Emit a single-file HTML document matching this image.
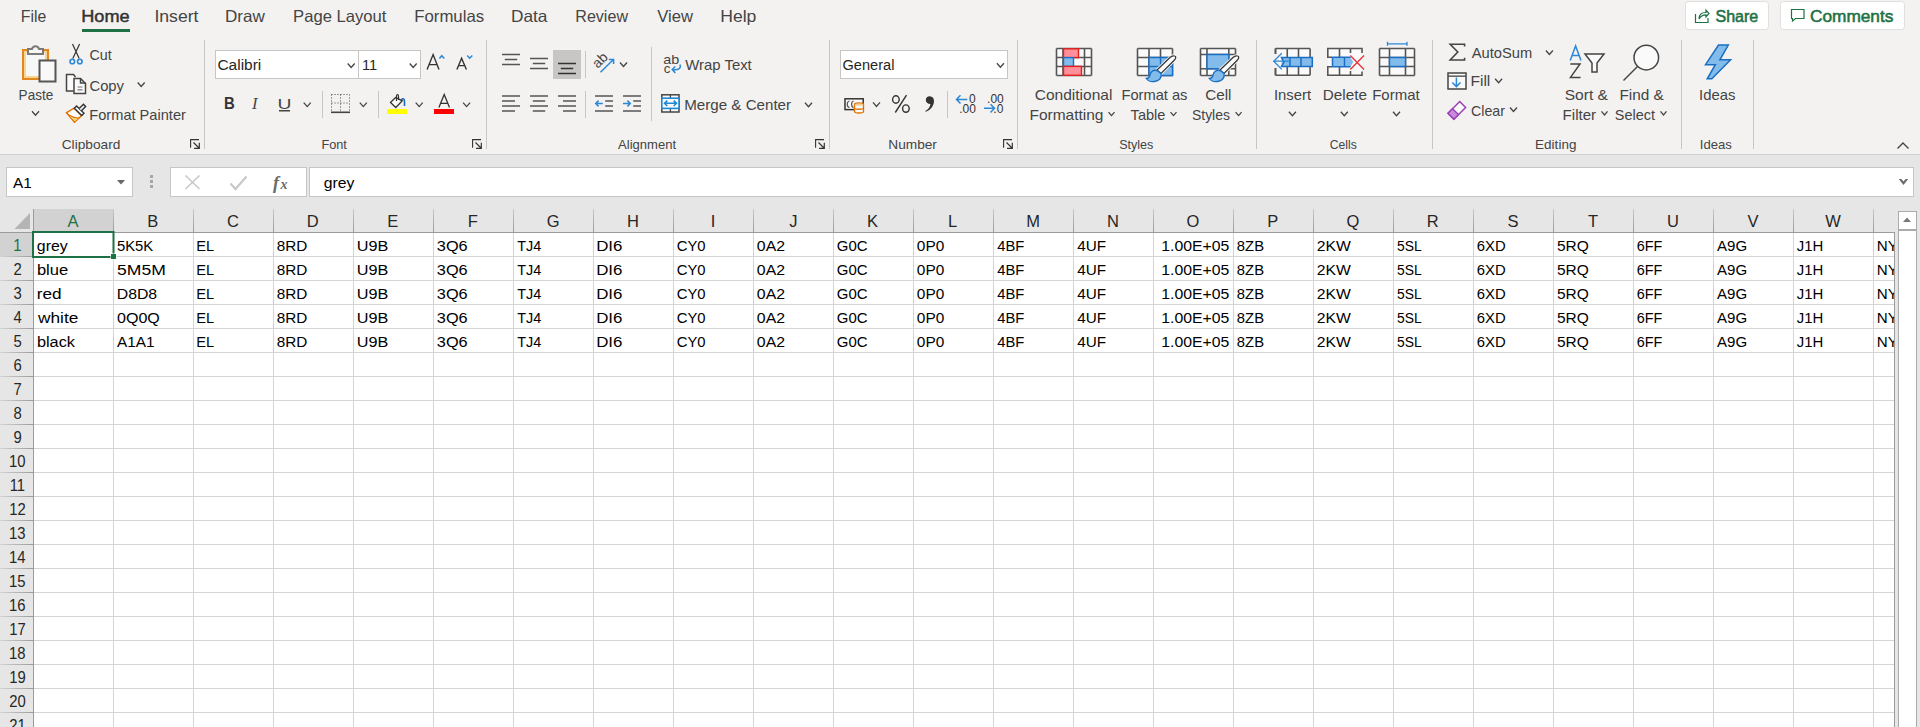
<!DOCTYPE html><html><head><meta charset="utf-8"><style>
html,body{margin:0;padding:0;width:1920px;height:727px;overflow:hidden;background:#e6e6e6}
svg{display:block;font-family:"Liberation Sans",sans-serif}
</style></head><body><svg width="1920" height="727" viewBox="0 0 1920 727">
<rect x="0" y="0" width="1920" height="154" fill="#f3f2f1" />
<rect x="0" y="154" width="1920" height="1" fill="#d2d0ce" />
<rect x="0" y="155" width="1920" height="572" fill="#e6e6e6" />
<text x="20.73" y="22" font-size="16.5" font-weight="normal" fill="#444444" textLength="25.50" lengthAdjust="spacingAndGlyphs">File</text>
<text stroke="#333333" stroke-width="0.45" x="81.25" y="22" font-size="16.5" font-weight="normal" fill="#333333" textLength="48.42" lengthAdjust="spacingAndGlyphs">Home</text>
<text x="154.41" y="22" font-size="16.5" font-weight="normal" fill="#444444" textLength="44.09" lengthAdjust="spacingAndGlyphs">Insert</text>
<text x="225.03" y="22" font-size="16.5" font-weight="normal" fill="#444444" textLength="39.95" lengthAdjust="spacingAndGlyphs">Draw</text>
<text x="293.07" y="22" font-size="16.5" font-weight="normal" fill="#444444" textLength="93.43" lengthAdjust="spacingAndGlyphs">Page Layout</text>
<text x="414.26" y="22" font-size="16.5" font-weight="normal" fill="#444444" textLength="69.89" lengthAdjust="spacingAndGlyphs">Formulas</text>
<text x="511.02" y="22" font-size="16.5" font-weight="normal" fill="#444444" textLength="36.42" lengthAdjust="spacingAndGlyphs">Data</text>
<text x="575.32" y="22" font-size="16.5" font-weight="normal" fill="#444444" textLength="52.67" lengthAdjust="spacingAndGlyphs">Review</text>
<text x="657.32" y="22" font-size="16.5" font-weight="normal" fill="#444444" textLength="35.68" lengthAdjust="spacingAndGlyphs">View</text>
<text x="720.19" y="22" font-size="16.5" font-weight="normal" fill="#444444" textLength="36.14" lengthAdjust="spacingAndGlyphs">Help</text>
<rect x="82" y="29" width="48" height="3" fill="#1e7145" />
<rect x="1685.5" y="1.5" width="83" height="28" fill="#ffffff" stroke="#e1dfdd" stroke-width="1" rx="3"/>
<rect x="1780.5" y="1.5" width="124" height="28" fill="#ffffff" stroke="#e1dfdd" stroke-width="1" rx="3"/>
<text stroke="#1e7145" stroke-width="0.55" x="1715.48" y="22.3" font-size="16.5" font-weight="normal" fill="#1e7145" textLength="42.80" lengthAdjust="spacingAndGlyphs">Share</text>
<text stroke="#1e7145" stroke-width="0.55" x="1809.94" y="22.3" font-size="16.5" font-weight="normal" fill="#1e7145" textLength="83.46" lengthAdjust="spacingAndGlyphs">Comments</text>
<path d="M1695.5,14 V22.5 H1708 V18" fill="none" stroke="#1e7145" stroke-width="1.2" />
<path d="M1699,19 C1699,14 1702,12.5 1706,12.5 V10 L1709,13.5 L1706,17 V14.8 C1703,14.8 1700.5,16 1699,19 Z" fill="none" stroke="#1e7145" stroke-width="1.2" />
<path d="M1791.5,9.5 H1804 V18.5 H1795.5 L1792.5,21 V18.5 H1791.5 Z" fill="none" stroke="#1e7145" stroke-width="1.2" />
<rect x="204" y="40" width="1" height="109" fill="#c8c6c4" />
<rect x="486" y="40" width="1" height="109" fill="#c8c6c4" />
<rect x="829" y="40" width="1" height="109" fill="#c8c6c4" />
<rect x="1017" y="40" width="1" height="109" fill="#c8c6c4" />
<rect x="1256" y="40" width="1" height="109" fill="#c8c6c4" />
<rect x="1432" y="40" width="1" height="109" fill="#c8c6c4" />
<rect x="1681" y="40" width="1" height="109" fill="#c8c6c4" />
<rect x="1753" y="40" width="1" height="109" fill="#c8c6c4" />
<text x="61.71" y="149" font-size="12.8" font-weight="normal" fill="#444444" textLength="58.68" lengthAdjust="spacingAndGlyphs">Clipboard</text>
<text x="321.38" y="149" font-size="12.8" font-weight="normal" fill="#444444" textLength="25.50" lengthAdjust="spacingAndGlyphs">Font</text>
<text x="618.10" y="149" font-size="12.8" font-weight="normal" fill="#444444" textLength="57.99" lengthAdjust="spacingAndGlyphs">Alignment</text>
<text x="888.31" y="149" font-size="12.8" font-weight="normal" fill="#444444" textLength="48.62" lengthAdjust="spacingAndGlyphs">Number</text>
<text x="1119.13" y="149" font-size="12.8" font-weight="normal" fill="#444444" textLength="34.28" lengthAdjust="spacingAndGlyphs">Styles</text>
<text x="1329.79" y="149" font-size="12.8" font-weight="normal" fill="#444444" textLength="27.01" lengthAdjust="spacingAndGlyphs">Cells</text>
<text x="1535.12" y="149" font-size="12.8" font-weight="normal" fill="#444444" textLength="41.30" lengthAdjust="spacingAndGlyphs">Editing</text>
<text x="1699.82" y="149" font-size="12.8" font-weight="normal" fill="#444444" textLength="32.06" lengthAdjust="spacingAndGlyphs">Ideas</text>
<path d="M190.6,147.8 V139.6 H199" fill="none" stroke="#333" stroke-width="1.1" />
<path d="M193.5,142.5 L199,148 M199.3,142.8 V148.3 H194" fill="none" stroke="#333" stroke-width="1.2" />
<path d="M472.6,147.8 V139.6 H481" fill="none" stroke="#333" stroke-width="1.1" />
<path d="M475.5,142.5 L481,148 M481.3,142.8 V148.3 H476" fill="none" stroke="#333" stroke-width="1.2" />
<path d="M815.6,147.8 V139.6 H824" fill="none" stroke="#333" stroke-width="1.1" />
<path d="M818.5,142.5 L824,148 M824.3,142.8 V148.3 H819" fill="none" stroke="#333" stroke-width="1.2" />
<path d="M1003.6,147.8 V139.6 H1012" fill="none" stroke="#333" stroke-width="1.1" />
<path d="M1006.5,142.5 L1012,148 M1012.3,142.8 V148.3 H1007" fill="none" stroke="#333" stroke-width="1.2" />
<path d="M1897.5,148.5 L1903,143 L1908.5,148.5" fill="none" stroke="#444" stroke-width="1.4" />
<rect x="23" y="50" width="25" height="29" fill="#f7f7f7" stroke="#e3871f" stroke-width="2" />
<rect x="25" y="52" width="21" height="25" fill="none" stroke="#f6d58e" stroke-width="2" />
<path d="M28,49 H32 A3.6,3.6 0 0 1 39,49 H43 V54 H28 Z" fill="#f7f7f7" stroke="#7a7a7a" stroke-width="2" />
<rect x="39.5" y="60.5" width="16" height="21" fill="#f9f9f9" stroke="#555555" stroke-width="2" />
<text x="18.62" y="99.7" font-size="14.5" font-weight="normal" fill="#444444" textLength="34.62" lengthAdjust="spacingAndGlyphs">Paste</text>
<path d="M32.0,111.3 L35.5,115.3 L39.0,111.3" fill="none" stroke="#444" stroke-width="1.3" />
<path d="M72.5,44 L79.2,58.5 M79.6,44 L72.8,58.5" fill="none" stroke="#333" stroke-width="1.2" />
<circle cx="72.3" cy="61.5" r="2.3" fill="none" stroke="#2b88d8" stroke-width="1.6"/>
<circle cx="79.8" cy="61.5" r="2.3" fill="none" stroke="#2b88d8" stroke-width="1.6"/>
<text x="89.49" y="59.7" font-size="14.5" font-weight="normal" fill="#444444" textLength="22.20" lengthAdjust="spacingAndGlyphs">Cut</text>
<path d="M75.5,77 L73.5,74.5 H66.5 V91 H73.5" fill="#fafafa" stroke="#444" stroke-width="1.5" />
<path d="M74,78.5 H80.5 L85.5,83.5 V93.5 H74 Z" fill="#fafafa" stroke="#444" stroke-width="1.5" />
<path d="M80.5,78.5 V83 H85.5" fill="none" stroke="#444" stroke-width="1.5" />
<path d="M77.5,87 H82.5 M77.5,89.8 H82.5" fill="none" stroke="#777" stroke-width="1.2" />
<text x="89.46" y="90.5" font-size="14.5" font-weight="normal" fill="#444444" textLength="34.53" lengthAdjust="spacingAndGlyphs">Copy</text>
<path d="M137.7,82.5 L141.2,86.5 L144.7,82.5" fill="none" stroke="#444" stroke-width="1.3" />
<path d="M74.3,108.2 L81.7,115.6 L74.5,122.2 L66.5,112.6 Z" fill="#fdfdfd" stroke="#e07000" stroke-width="1.5" />
<path d="M69.5,116 L78.5,118.3 L74.6,121.2 Z" fill="#f8d27a" stroke="none" stroke-width="1" />
<path d="M69,115 C72,117 76,118 79,118" fill="none" stroke="#e07000" stroke-width="1.2" />
<path d="M74.3,108.2 L76.6,105.9 L84,113.3 L81.7,115.6 Z" fill="#fafafa" stroke="#333" stroke-width="1.4" />
<path d="M79.2,108.5 L83.5,104.3 L85.6,106.4 L81.4,110.7" fill="#fafafa" stroke="#333" stroke-width="1.4" />
<text x="89.33" y="119.6" font-size="14.5" font-weight="normal" fill="#444444" textLength="96.54" lengthAdjust="spacingAndGlyphs">Format Painter</text>
<rect x="215.5" y="50.5" width="143" height="28" fill="#ffffff" stroke="#c8c6c4" stroke-width="1" />
<rect x="358.5" y="50.5" width="62" height="28" fill="#ffffff" stroke="#c8c6c4" stroke-width="1" />
<text x="217.43" y="70" font-size="15.3" font-weight="normal" fill="#262626" textLength="43.84" lengthAdjust="spacingAndGlyphs">Calibri</text>
<path d="M347.7,63.5 L351.2,67.5 L354.7,63.5" fill="none" stroke="#444" stroke-width="1.3" />
<text x="361.90" y="70" font-size="15.3" font-weight="normal" fill="#262626" textLength="15.20" lengthAdjust="spacingAndGlyphs">11</text>
<path d="M409.7,63.5 L413.2,67.5 L416.7,63.5" fill="none" stroke="#444" stroke-width="1.3" />
<path d="M427.1,69.6 L433.1,54.6 L439,69.6 M429.3,64.6 H436.8" fill="none" stroke="#333" stroke-width="1.4" />
<path d="M439.4,58.4 L441.8,55.7 L444.3,58.4" fill="none" stroke="#2b88d8" stroke-width="1.5" />
<path d="M456.9,69.6 L461.6,58.2 L466.4,69.6 M458.5,65.6 H464.8" fill="none" stroke="#333" stroke-width="1.4" />
<path d="M467.2,55.4 L469.7,58.2 L472.3,55.4" fill="none" stroke="#2b88d8" stroke-width="1.5" />
<text x="223.93" y="108.5" font-size="16.5" font-weight="bold" fill="#333" textLength="10.77" lengthAdjust="spacingAndGlyphs">B</text>
<text x="252" y="108.5" font-size="16.5" font-style="italic" font-family="Liberation Serif" fill="#444">I</text>
<text x="277.45" y="108.5" font-size="15.5" font-weight="normal" fill="#444" textLength="13.94" lengthAdjust="spacingAndGlyphs">U</text>
<rect x="279" y="110" width="11" height="1.5" fill="#444" />
<path d="M303.7,102.6 L307.2,106.6 L310.7,102.6" fill="none" stroke="#444" stroke-width="1.3" />
<rect x="322" y="91" width="1" height="27" fill="#c8c6c4" />
<path d="M331.5,94.5 H349.5 V111 M331.5,94.5 V111 M340.5,94.5 V111 M331.5,103 H349.5" fill="none" stroke="#444" stroke-width="1" stroke-dasharray="1 2"/>
<rect x="331" y="111.5" width="19" height="1.6" fill="#444" />
<path d="M359.8,102.6 L363.3,106.6 L366.8,102.6" fill="none" stroke="#444" stroke-width="1.3" />
<rect x="378" y="91" width="1" height="27" fill="#c8c6c4" />
<path d="M390.5,102.5 L395.5,97.5 L402.3,100.8 L395.8,107.5 Z" fill="#fafafa" stroke="#333" stroke-width="1.3" />
<path d="M396.5,101 V96.5 C396.5,94 398.5,94 398.5,96.5 V100" fill="none" stroke="#333" stroke-width="1.2" />
<path d="M401.5,100 C402,98 404.5,98.5 404.5,101 V106" fill="none" stroke="#1a6fc4" stroke-width="1.6" />
<rect x="387" y="109" width="20" height="5" fill="#ffff00" />
<path d="M415.7,102.6 L419.2,106.6 L422.7,102.6" fill="none" stroke="#444" stroke-width="1.3" />
<path d="M438.9,107.5 L444.2,94.5 L449.5,107.5 M440.7,103.3 H447.7" fill="none" stroke="#333" stroke-width="1.3" />
<rect x="434" y="109" width="20" height="5" fill="#ff0000" />
<path d="M463.1,102.6 L466.6,106.6 L470.1,102.6" fill="none" stroke="#444" stroke-width="1.3" />
<path d="M502,54.5 H520 M504.8,59.5 H517.2 M502,64.5 H520 " fill="none" stroke="#555" stroke-width="1.5" />
<path d="M530,58.5 H548 M532.8,63.5 H545.2 M530,68.5 H548 " fill="none" stroke="#555" stroke-width="1.5" />
<rect x="553" y="50" width="28" height="29" fill="#c8c6c4" />
<path d="M558,63.5 H576 M560.8,68.5 H573.2 M558,73.5 H576 " fill="none" stroke="#333" stroke-width="1.5" />
<rect x="585" y="51" width="1" height="27" fill="#c8c6c4" />
<text x="0" y="0" font-size="14" fill="#444" transform="translate(597.8,69) rotate(-45)">ab</text>
<path d="M600.5,72.3 L613.2,59.8 M608.8,59.6 H613.6 V64" fill="none" stroke="#2b88d8" stroke-width="1.5" />
<path d="M620.0,62.5 L623.5,66.5 L627.0,62.5" fill="none" stroke="#444" stroke-width="1.3" />
<path d="M502,96 H520 M502,101 H515 M502,106 H520 M502,111 H515 " fill="none" stroke="#555" stroke-width="1.5" />
<path d="M530,96 H548 M532.8,101 H545.2 M530,106 H548 M532.8,111 H545.2 " fill="none" stroke="#555" stroke-width="1.5" />
<path d="M558,96 H576 M563,101 H576 M558,106 H576 M563,111 H576 " fill="none" stroke="#555" stroke-width="1.5" />
<rect x="585" y="91" width="1" height="27" fill="#c8c6c4" />
<path d="M595,96 H613 M595,111 H613 " fill="none" stroke="#555" stroke-width="1.5" />
<path d="M605.2,101 H613 M605.2,106 H613 " fill="none" stroke="#555" stroke-width="1.5" />
<path d="M595.8,103.5 H602.8 M598.6,100.6 L595.7,103.5 L598.6,106.4" fill="none" stroke="#2b88d8" stroke-width="1.5" />
<path d="M623,96 H641 M623,111 H641 " fill="none" stroke="#555" stroke-width="1.5" />
<path d="M633.2,101 H641 M633.2,106 H641 " fill="none" stroke="#555" stroke-width="1.5" />
<path d="M623,103.5 H630.2 M627.4,100.6 L630.3,103.5 L627.4,106.4" fill="none" stroke="#2b88d8" stroke-width="1.5" />
<rect x="651" y="47" width="1" height="74" fill="#c8c6c4" />
<text x="663.33" y="63.8" font-size="13" font-weight="normal" fill="#444" textLength="15.98" lengthAdjust="spacingAndGlyphs">ab</text>
<text x="663.78" y="72.5" font-size="13" font-weight="normal" fill="#444" textLength="6.55" lengthAdjust="spacingAndGlyphs">c</text>
<path d="M680,64.5 C681.5,68.5 678,70.5 672.5,69.5 M675.3,66.5 L672.2,69.5 L675.3,73" fill="none" stroke="#2b88d8" stroke-width="1.5" />
<text x="685.33" y="70.3" font-size="14.5" font-weight="normal" fill="#444444" textLength="66.42" lengthAdjust="spacingAndGlyphs">Wrap Text</text>
<rect x="661.8" y="94.8" width="17.2" height="17.2" fill="#fafafa" stroke="#444" stroke-width="1.5" />
<path d="M670.4,94.8 V98 M670.4,108.5 V112" fill="none" stroke="#444" stroke-width="1.3" />
<rect x="661.8" y="98.2" width="17.2" height="10.2" fill="#fafafa" stroke="#1e88d4" stroke-width="1.6" />
<path d="M664.8,103.3 H676.2 M667.3,100.6 L664.5,103.3 L667.3,106 M673.7,100.6 L676.5,103.3 L673.7,106" fill="none" stroke="#1e88d4" stroke-width="1.6" />
<text x="684.19" y="110.4" font-size="14.5" font-weight="normal" fill="#444444" textLength="106.90" lengthAdjust="spacingAndGlyphs">Merge &amp; Center</text>
<path d="M805.0,102.8 L808.5,106.8 L812.0,102.8" fill="none" stroke="#444" stroke-width="1.3" />
<rect x="840.5" y="50.5" width="167" height="28" fill="#ffffff" stroke="#c8c6c4" stroke-width="1" />
<text x="842.47" y="70.2" font-size="15.3" font-weight="normal" fill="#262626" textLength="51.92" lengthAdjust="spacingAndGlyphs">General</text>
<path d="M996.9,63.3 L1000.4,67.3 L1003.9,63.3" fill="none" stroke="#444" stroke-width="1.3" />
<rect x="845" y="98.8" width="18.2" height="10.8" fill="#fafafa" stroke="#333" stroke-width="1.5" />
<path d="M849.5,101 C846.5,101.5 846.5,107 849.5,107.5 M853.5,101 C851,101.5 851,107 853.5,107.5" fill="none" stroke="#555" stroke-width="1.2" />
<path d="M854.5,104.3 C854.5,102.5 863.5,102.5 863.5,104.3 V111.5 C863.5,113.5 854.5,113.5 854.5,111.5 Z" fill="#fafafa" stroke="#e07000" stroke-width="1.3" />
<path d="M854.5,104.3 C854.5,106 863.5,106 863.5,104.3 Z" fill="#f8c060" stroke="none" stroke-width="1" />
<path d="M854.5,108 C854.5,109.7 863.5,109.7 863.5,108" fill="none" stroke="#e07000" stroke-width="1.3" />
<path d="M873.0,102.4 L876.5,106.4 L880.0,102.4" fill="none" stroke="#444" stroke-width="1.3" />
<ellipse cx="895.9" cy="99.5" rx="3.3" ry="3.7" fill="none" stroke="#333" stroke-width="1.4"/>
<ellipse cx="905.9" cy="108.6" rx="3.3" ry="3.7" fill="none" stroke="#333" stroke-width="1.4"/>
<path d="M906.5,95.2 L895.3,112.5" fill="none" stroke="#333" stroke-width="1.4" />
<path d="M929.5,96.2 C933.5,96.2 934.5,100 933.8,103 C932.8,107.5 929.5,110.5 925.6,111.8 L925.3,111 C928,109.5 930,107.5 930.5,104 C927.5,104 925.8,102 925.8,100 C925.8,97.8 927.5,96.2 929.5,96.2 Z" fill="#333" stroke="none" stroke-width="1" />
<rect x="947" y="91" width="1" height="27" fill="#c8c6c4" />
<text x="969.12" y="102.5" font-size="12" font-weight="normal" fill="#333">0</text>
<text x="959.22" y="112.7" font-size="12" font-weight="normal" fill="#333">.00</text>
<path d="M956.5,99.4 H967.3 M960.5,95.3 L956.5,99.4 L960.5,103.6" fill="none" stroke="#2b88d8" stroke-width="1.5" />
<text x="987.12" y="102.5" font-size="12" font-weight="normal" fill="#333">.00</text>
<text x="993.32" y="112.7" font-size="12" font-weight="normal" fill="#333">.0</text>
<path d="M984,108.3 H994.5 M990.5,104.2 L994.5,108.3 L990.5,112.5" fill="none" stroke="#2b88d8" stroke-width="1.5" />
<rect x="1057" y="49" width="35" height="27" fill="#fafafa" />
<path d="M1056.5,48.5 V75.5 M1063.0,48.5 V75.5 M1084.5,48.5 V75.5 M1091.5,48.5 V75.5 M1056.5,48.5 H1091.5 M1056.5,57.5 H1091.5 M1056.5,66.5 H1091.5 M1056.5,75.5 H1091.5 " fill="none" stroke="#555" stroke-width="1.6" />
<rect x="1063.5" y="48.8" width="15" height="8.8" fill="#ff8f98" stroke="#e02020" stroke-width="1.4" />
<rect x="1063.5" y="57.6" width="10" height="8.8" fill="#83bcea" stroke="#1a6fc4" stroke-width="1.4" />
<rect x="1063.5" y="66.4" width="18" height="8.9" fill="#ff8f98" stroke="#e02020" stroke-width="1.4" />
<text x="1034.72" y="99.8" font-size="14.5" font-weight="normal" fill="#444444" textLength="77.74" lengthAdjust="spacingAndGlyphs">Conditional</text>
<text x="1029.46" y="120" font-size="14.5" font-weight="normal" fill="#444444" textLength="74.04" lengthAdjust="spacingAndGlyphs">Formatting</text>
<path d="M1108.5,112.05 L1111.5,115.55 L1114.5,112.05" fill="none" stroke="#444" stroke-width="1.3" />
<rect x="1138" y="49" width="34" height="26" fill="#fafafa" />
<path d="M1137.5,48.5 V75.5 M1149.0,48.5 V75.5 M1160.5,48.5 V75.5 M1172.5,48.5 V75.5 M1137.5,48.5 H1172.5 M1137.5,57.5 H1172.5 M1137.5,66.5 H1172.5 M1137.5,75.5 H1172.5 " fill="none" stroke="#555" stroke-width="1.6" />
<rect x="1149" y="57.5" width="23.5" height="18" fill="#83bcea" />
<path d="M1149,57.5 H1172.5 V75.5 H1149 Z M1160.5,57.5 V75.5 M1149,66.5 H1172.5" fill="none" stroke="#1a6fc4" stroke-width="1.4" />
<path d="M1174.5,56 C1176.5,56.5 1176,58.5 1174,60.5 L1161,73.5 L1157,70 L1170,57.5 C1171.5,56 1173,55.5 1174.5,56 Z" fill="#f3f2f1" stroke="#f3f2f1" stroke-width="3" />
<path d="M1174.5,56 C1176.5,56.5 1176,58.5 1174,60.5 L1161,73.5 L1157,70 L1170,57.5 C1171.5,56 1173,55.5 1174.5,56 Z" fill="#fafafa" stroke="#333" stroke-width="1.2" />
<path d="M1157,70.5 C1153,69.5 1150.5,72 1150,75 C1149.5,77.5 1148,78.5 1146.3,78.5 C1148,81 1151,82 1154.5,81.5 C1159,81 1162,78 1161,73.5 Z" fill="#83bcea" stroke="#1a6fc4" stroke-width="1.3" />
<text x="1121.53" y="99.8" font-size="14.5" font-weight="normal" fill="#444444" textLength="65.90" lengthAdjust="spacingAndGlyphs">Format as</text>
<text x="1130.61" y="120" font-size="14.5" font-weight="normal" fill="#444444" textLength="34.86" lengthAdjust="spacingAndGlyphs">Table</text>
<path d="M1170.5,112.05 L1173.5,115.55 L1176.5,112.05" fill="none" stroke="#444" stroke-width="1.3" />
<rect x="1201" y="49" width="34" height="26" fill="#fafafa" />
<path d="M1200.5,48.5 V75.5 M1207.0,48.5 V75.5 M1228.8,48.5 V75.5 M1235.5,48.5 V75.5 M1200.5,48.5 H1235.5 M1200.5,54.5 H1235.5 M1200.5,68.8 H1235.5 M1200.5,75.5 H1235.5 " fill="none" stroke="#555" stroke-width="1.6" />
<rect x="1207" y="54.5" width="21.8" height="14.3" fill="#83bcea" />
<path d="M1207,54.5 H1228.8 V68.8 H1207 Z" fill="none" stroke="#1a6fc4" stroke-width="1.4" />
<path d="M1237.5,56 C1239.5,56.5 1239,58.5 1237,60.5 L1224,73.5 L1220,70 L1233,57.5 C1234.5,56 1236,55.5 1237.5,56 Z" fill="#f3f2f1" stroke="#f3f2f1" stroke-width="3" />
<path d="M1237.5,56 C1239.5,56.5 1239,58.5 1237,60.5 L1224,73.5 L1220,70 L1233,57.5 C1234.5,56 1236,55.5 1237.5,56 Z" fill="#fafafa" stroke="#333" stroke-width="1.2" />
<path d="M1220,70.5 C1216,69.5 1213.5,72 1213,75 C1212.5,77.5 1211,78.5 1209.3,78.5 C1211,81 1214,82 1217.5,81.5 C1222,81 1225,78 1224,73.5 Z" fill="#83bcea" stroke="#1a6fc4" stroke-width="1.3" />
<text x="1205.24" y="99.8" font-size="14.5" font-weight="normal" fill="#444444" textLength="26.19" lengthAdjust="spacingAndGlyphs">Cell</text>
<text x="1191.97" y="120" font-size="14.5" font-weight="normal" fill="#444444" textLength="37.99" lengthAdjust="spacingAndGlyphs">Styles</text>
<path d="M1235.6,112.05 L1238.6,115.55 L1241.6,112.05" fill="none" stroke="#444" stroke-width="1.3" />
<rect x="1276" y="49" width="34" height="26" fill="#fafafa" />
<path d="M1275.5,48.5 V75.2 M1287.25,48.5 V75.2 M1298.5,48.5 V75.2 M1310.1,48.5 V75.2 M1275.5,48.5 H1310.1 M1275.5,75.2 H1310.1 " fill="none" stroke="#555" stroke-width="1.6" />
<path d="M1275.5,48.5 V75.2" fill="none" stroke="#555" stroke-width="1.6" />
<rect x="1274" y="54" width="5" height="14" fill="#f3f2f1" />
<rect x="1281.5" y="57.5" width="31" height="9" fill="#83bcea" />
<path d="M1281.5,57.5 H1312.3 V66.5 H1281.5 L1284,62 Z M1290,57.5 V66.5 M1301,57.5 V66.5" fill="none" stroke="#1a6fc4" stroke-width="1.5" />
<path d="M1281.8,53.2 L1273.7,61.2 L1281.8,69.4 M1274,61.2 H1288.9" fill="none" stroke="#2b88d8" stroke-width="1.3" />
<text x="1273.96" y="99.9" font-size="14.5" font-weight="normal" fill="#444444" textLength="37.13" lengthAdjust="spacingAndGlyphs">Insert</text>
<path d="M1288.9,111.7 L1292.4,115.7 L1295.9,111.7" fill="none" stroke="#444" stroke-width="1.3" />
<rect x="1328" y="49" width="34" height="26" fill="#fafafa" />
<path d="M1332.5,57.3 H1327.8 V48.5 H1362 V53 M1332.5,66.7 H1327.8 V75.2 H1362 V71.5 M1339.5,48.5 V75.2 M1350.5,48.5 V53 M1350.5,71 V75.2" fill="none" stroke="#555" stroke-width="1.6" />
<rect x="1332.5" y="57.5" width="18" height="9" fill="#83bcea" />
<path d="M1332.5,57.5 H1350.5 L1353.3,62 L1350.5,66.5 H1332.5 Z" fill="#83bcea" stroke="none" stroke-width="1" />
<path d="M1332.5,57.3 H1350.5 M1332.5,66.7 H1350.5 M1332.5,57.3 V66.7 M1344.5,57.3 V66.7" fill="none" stroke="#1a6fc4" stroke-width="1.5" />
<path d="M1350.3,55.5 L1364,69.6 M1364,55.5 L1350.3,69.6" fill="none" stroke="#e8363c" stroke-width="1.4" />
<text x="1322.78" y="99.9" font-size="14.5" font-weight="normal" fill="#444444" textLength="44.12" lengthAdjust="spacingAndGlyphs">Delete</text>
<path d="M1340.8,111.7 L1344.3,115.7 L1347.8,111.7" fill="none" stroke="#444" stroke-width="1.3" />
<rect x="1380" y="49" width="34" height="26" fill="#fafafa" />
<path d="M1379.5,48.5 V75.5 M1389.5,48.5 V75.5 M1405.5,48.5 V75.5 M1414.5,48.5 V75.5 M1379.5,48.5 H1414.5 M1379.5,57.5 H1414.5 M1379.5,66.5 H1414.5 M1379.5,75.5 H1414.5 " fill="none" stroke="#555" stroke-width="1.6" />
<rect x="1389.5" y="57.5" width="16" height="9" fill="#83bcea" />
<path d="M1389.5,57.5 H1405.5 V66.5 H1389.5 Z" fill="none" stroke="#1a6fc4" stroke-width="1.4" />
<path d="M1387.5,43.8 H1407 M1387.5,41.8 V45.8 M1407,41.8 V45.8" fill="none" stroke="#2b88d8" stroke-width="1.3" />
<text x="1372.20" y="99.9" font-size="14.5" font-weight="normal" fill="#444444" textLength="47.51" lengthAdjust="spacingAndGlyphs">Format</text>
<path d="M1393.0,111.7 L1396.5,115.7 L1400.0,111.7" fill="none" stroke="#444" stroke-width="1.3" />
<path d="M1464.6,46.5 V44.2 H1450.2 L1457.8,52 L1450.2,60 H1464.6 V57.8" fill="none" stroke="#444" stroke-width="1.6" />
<text x="1471.70" y="57.7" font-size="14.5" font-weight="normal" fill="#444444" textLength="60.53" lengthAdjust="spacingAndGlyphs">AutoSum</text>
<path d="M1545.9,50.5 L1549.4,54.5 L1552.9,50.5" fill="none" stroke="#444" stroke-width="1.3" />
<rect x="1448" y="73" width="18" height="16" fill="#fafafa" stroke="#444" stroke-width="1.5" />
<rect x="1448" y="75.5" width="18" height="1.3" fill="#444" />
<path d="M1456.4,77.5 V86.5 M1452.3,82.5 L1456.4,86.6 L1460.5,82.5" fill="none" stroke="#2b88d8" stroke-width="1.5" />
<text x="1470.45" y="86.4" font-size="14.5" font-weight="normal" fill="#444444" textLength="19.90" lengthAdjust="spacingAndGlyphs">Fill</text>
<path d="M1495.1,78.7 L1498.6,82.7 L1502.1,78.7" fill="none" stroke="#444" stroke-width="1.3" />
<path d="M1459.7,101.5 L1465.6,107.6 L1453.9,119.2 L1448,113.2 Z" fill="#fafafa" stroke="#9b3fb8" stroke-width="1.5" />
<path d="M1448,113.2 L1452.5,108.7 L1458.5,114.6 L1453.9,119.2 Z" fill="#c98bdc" stroke="#9b3fb8" stroke-width="1.4" />
<text x="1470.99" y="115.9" font-size="14.5" font-weight="normal" fill="#444444" textLength="33.99" lengthAdjust="spacingAndGlyphs">Clear</text>
<path d="M1510.0,107.5 L1513.5,111.5 L1517.0,107.5" fill="none" stroke="#444" stroke-width="1.3" />
<path d="M1570.2,60.6 L1575.6,46 L1581,60.6 M1572,55.6 H1579.2" fill="none" stroke="#2b88d8" stroke-width="1.5" />
<path d="M1570.3,64 H1580 L1570.5,77.4 H1580.6" fill="none" stroke="#444" stroke-width="1.5" />
<path d="M1585,54 H1604 L1597,63 V72 H1592 V63 Z" fill="#fafafa" stroke="#444" stroke-width="1.5" />
<text x="1564.70" y="99.6" font-size="14.5" font-weight="normal" fill="#444444" textLength="43.30" lengthAdjust="spacingAndGlyphs">Sort &amp;</text>
<text x="1562.59" y="119.7" font-size="14.5" font-weight="normal" fill="#444444" textLength="33.57" lengthAdjust="spacingAndGlyphs">Filter</text>
<path d="M1601.5,111.45 L1604.5,114.95 L1607.5,111.45" fill="none" stroke="#444" stroke-width="1.3" />
<circle cx="1646.3" cy="57.6" r="12.3" fill="#fafafa" stroke="#444" stroke-width="1.5"/>
<path d="M1637.5,66.5 L1623.5,80.5" fill="none" stroke="#444" stroke-width="1.5" />
<text x="1619.47" y="99.6" font-size="14.5" font-weight="normal" fill="#444444" textLength="44.36" lengthAdjust="spacingAndGlyphs">Find &amp;</text>
<text x="1614.85" y="119.7" font-size="14.5" font-weight="normal" fill="#444444" textLength="40.08" lengthAdjust="spacingAndGlyphs">Select</text>
<path d="M1660.5,111.45 L1663.5,114.95 L1666.5,111.45" fill="none" stroke="#444" stroke-width="1.3" />
<path d="M1718.5,45 H1728.3 L1719.9,59.8 H1730.6 L1711.8,78.8 H1707.2 L1715.3,64.7 H1705.5 Z" fill="#83bcea" stroke="#1a6fc4" stroke-width="1.5" stroke-linejoin="miter"/>
<text x="1699.07" y="100" font-size="14.5" font-weight="normal" fill="#444444" textLength="36.27" lengthAdjust="spacingAndGlyphs">Ideas</text>
<rect x="6.5" y="167.5" width="126" height="29" fill="#ffffff" stroke="#c6c6c6" stroke-width="1" />
<text x="13.00" y="188" font-size="15.5" font-weight="normal" fill="#000" textLength="18.74" lengthAdjust="spacingAndGlyphs">A1</text>
<path d="M117,180 H125 L121,184.5 Z" fill="#666" stroke="none" stroke-width="1" />
<rect x="150" y="175" width="3" height="3" fill="#a6a6a6" />
<rect x="150" y="180" width="3" height="3" fill="#a6a6a6" />
<rect x="150" y="185" width="3" height="3" fill="#a6a6a6" />
<rect x="170.5" y="167.5" width="136" height="29" fill="#ffffff" stroke="#c6c6c6" stroke-width="1" />
<path d="M185.5,175.5 L199.5,189 M199.5,175.5 L185.5,189" fill="none" stroke="#c8c8c8" stroke-width="1.6" />
<path d="M230.5,183.5 L235.5,189 L246.5,176.5" fill="none" stroke="#c8c8c8" stroke-width="2.2" />
<text x="273" y="189" font-size="18" font-weight="bold" font-style="italic" font-family="Liberation Serif" fill="#6a6a6a">f</text>
<text x="280.5" y="189" font-size="14" font-weight="bold" font-style="italic" font-family="Liberation Serif" fill="#6a6a6a">x</text>
<rect x="309.5" y="167.5" width="1604" height="29" fill="#ffffff" stroke="#c6c6c6" stroke-width="1" />
<text x="323.87" y="188" font-size="15.2" font-weight="normal" fill="#000" textLength="30.64" lengthAdjust="spacingAndGlyphs">grey</text>
<path d="M1898.8,179 H1901.2 L1903.5,181.6 L1905.8,179 H1908.2 L1903.5,184.9 Z" fill="#6a6a6a" stroke="none" stroke-width="1" />
<rect x="34" y="233" width="1860" height="494" fill="#ffffff" />
<path d="M113.5,233 V727 M193.5,233 V727 M273.5,233 V727 M353.5,233 V727 M433.5,233 V727 M513.5,233 V727 M593.5,233 V727 M673.5,233 V727 M753.5,233 V727 M833.5,233 V727 M913.5,233 V727 M993.5,233 V727 M1073.5,233 V727 M1153.5,233 V727 M1233.5,233 V727 M1313.5,233 V727 M1393.5,233 V727 M1473.5,233 V727 M1553.5,233 V727 M1633.5,233 V727 M1713.5,233 V727 M1793.5,233 V727 M1873.5,233 V727 M34,256.5 H1894 M34,280.5 H1894 M34,304.5 H1894 M34,328.5 H1894 M34,352.5 H1894 M34,376.5 H1894 M34,400.5 H1894 M34,424.5 H1894 M34,448.5 H1894 M34,472.5 H1894 M34,496.5 H1894 M34,520.5 H1894 M34,544.5 H1894 M34,568.5 H1894 M34,592.5 H1894 M34,616.5 H1894 M34,640.5 H1894 M34,664.5 H1894 M34,688.5 H1894 M34,712.5 H1894 " fill="none" stroke="#d4d4d4" stroke-width="1" />
<rect x="34" y="209" width="79" height="23" fill="#d2d2d2" />
<defs><linearGradient id="hd" x1="0" y1="0" x2="0" y2="1"><stop offset="0" stop-color="#c8c8c8"/><stop offset="1" stop-color="#999999"/></linearGradient></defs>
<rect x="33" y="209" width="1" height="23" fill="url(#hd)" />
<rect x="113" y="209" width="1" height="23" fill="url(#hd)" />
<rect x="193" y="209" width="1" height="23" fill="url(#hd)" />
<rect x="273" y="209" width="1" height="23" fill="url(#hd)" />
<rect x="353" y="209" width="1" height="23" fill="url(#hd)" />
<rect x="433" y="209" width="1" height="23" fill="url(#hd)" />
<rect x="513" y="209" width="1" height="23" fill="url(#hd)" />
<rect x="593" y="209" width="1" height="23" fill="url(#hd)" />
<rect x="673" y="209" width="1" height="23" fill="url(#hd)" />
<rect x="753" y="209" width="1" height="23" fill="url(#hd)" />
<rect x="833" y="209" width="1" height="23" fill="url(#hd)" />
<rect x="913" y="209" width="1" height="23" fill="url(#hd)" />
<rect x="993" y="209" width="1" height="23" fill="url(#hd)" />
<rect x="1073" y="209" width="1" height="23" fill="url(#hd)" />
<rect x="1153" y="209" width="1" height="23" fill="url(#hd)" />
<rect x="1233" y="209" width="1" height="23" fill="url(#hd)" />
<rect x="1313" y="209" width="1" height="23" fill="url(#hd)" />
<rect x="1393" y="209" width="1" height="23" fill="url(#hd)" />
<rect x="1473" y="209" width="1" height="23" fill="url(#hd)" />
<rect x="1553" y="209" width="1" height="23" fill="url(#hd)" />
<rect x="1633" y="209" width="1" height="23" fill="url(#hd)" />
<rect x="1713" y="209" width="1" height="23" fill="url(#hd)" />
<rect x="1793" y="209" width="1" height="23" fill="url(#hd)" />
<rect x="1873" y="209" width="1" height="23" fill="url(#hd)" />
<rect x="0" y="232" width="1894" height="1" fill="#9b9b9b" />
<rect x="33" y="209" width="1" height="518" fill="#9b9b9b" />
<text x="67.51" y="227" font-size="16.5" font-weight="normal" fill="#1e7145">A</text>
<text x="147.27" y="227" font-size="16.5" font-weight="normal" fill="#262626">B</text>
<text x="226.94" y="227" font-size="16.5" font-weight="normal" fill="#262626">C</text>
<text x="306.77" y="227" font-size="16.5" font-weight="normal" fill="#262626">D</text>
<text x="387.18" y="227" font-size="16.5" font-weight="normal" fill="#262626">E</text>
<text x="467.64" y="227" font-size="16.5" font-weight="normal" fill="#262626">F</text>
<text x="546.77" y="227" font-size="16.5" font-weight="normal" fill="#262626">G</text>
<text x="627.06" y="227" font-size="16.5" font-weight="normal" fill="#262626">H</text>
<text x="710.73" y="227" font-size="16.5" font-weight="normal" fill="#262626">I</text>
<text x="789.37" y="227" font-size="16.5" font-weight="normal" fill="#262626">J</text>
<text x="866.94" y="227" font-size="16.5" font-weight="normal" fill="#262626">K</text>
<text x="948.01" y="227" font-size="16.5" font-weight="normal" fill="#262626">L</text>
<text x="1026.15" y="227" font-size="16.5" font-weight="normal" fill="#262626">M</text>
<text x="1107.06" y="227" font-size="16.5" font-weight="normal" fill="#262626">N</text>
<text x="1186.61" y="227" font-size="16.5" font-weight="normal" fill="#262626">O</text>
<text x="1267.27" y="227" font-size="16.5" font-weight="normal" fill="#262626">P</text>
<text x="1346.61" y="227" font-size="16.5" font-weight="normal" fill="#262626">Q</text>
<text x="1426.77" y="227" font-size="16.5" font-weight="normal" fill="#262626">R</text>
<text x="1507.51" y="227" font-size="16.5" font-weight="normal" fill="#262626">S</text>
<text x="1587.97" y="227" font-size="16.5" font-weight="normal" fill="#262626">T</text>
<text x="1667.06" y="227" font-size="16.5" font-weight="normal" fill="#262626">U</text>
<text x="1747.51" y="227" font-size="16.5" font-weight="normal" fill="#262626">V</text>
<text x="1825.20" y="227" font-size="16.5" font-weight="normal" fill="#262626">W</text>
<rect x="0" y="233" width="33" height="23" fill="#d2d2d2" />
<defs><linearGradient id="rd" x1="0" y1="0" x2="1" y2="0"><stop offset="0" stop-color="#d2d2d2"/><stop offset="1" stop-color="#9c9c9c"/></linearGradient></defs>
<rect x="0" y="256" width="33" height="1" fill="url(#rd)" />
<rect x="0" y="280" width="33" height="1" fill="url(#rd)" />
<rect x="0" y="304" width="33" height="1" fill="url(#rd)" />
<rect x="0" y="328" width="33" height="1" fill="url(#rd)" />
<rect x="0" y="352" width="33" height="1" fill="url(#rd)" />
<rect x="0" y="376" width="33" height="1" fill="url(#rd)" />
<rect x="0" y="400" width="33" height="1" fill="url(#rd)" />
<rect x="0" y="424" width="33" height="1" fill="url(#rd)" />
<rect x="0" y="448" width="33" height="1" fill="url(#rd)" />
<rect x="0" y="472" width="33" height="1" fill="url(#rd)" />
<rect x="0" y="496" width="33" height="1" fill="url(#rd)" />
<rect x="0" y="520" width="33" height="1" fill="url(#rd)" />
<rect x="0" y="544" width="33" height="1" fill="url(#rd)" />
<rect x="0" y="568" width="33" height="1" fill="url(#rd)" />
<rect x="0" y="592" width="33" height="1" fill="url(#rd)" />
<rect x="0" y="616" width="33" height="1" fill="url(#rd)" />
<rect x="0" y="640" width="33" height="1" fill="url(#rd)" />
<rect x="0" y="664" width="33" height="1" fill="url(#rd)" />
<rect x="0" y="688" width="33" height="1" fill="url(#rd)" />
<rect x="0" y="712" width="33" height="1" fill="url(#rd)" />
<text x="13.26" y="251" font-size="16.5" font-weight="normal" fill="#1e7145" textLength="8.26" lengthAdjust="spacingAndGlyphs">1</text>
<text x="13.48" y="275" font-size="16.5" font-weight="normal" fill="#262626" textLength="8.26" lengthAdjust="spacingAndGlyphs">2</text>
<text x="13.48" y="299" font-size="16.5" font-weight="normal" fill="#262626" textLength="8.26" lengthAdjust="spacingAndGlyphs">3</text>
<text x="13.55" y="323" font-size="16.5" font-weight="normal" fill="#262626" textLength="8.26" lengthAdjust="spacingAndGlyphs">4</text>
<text x="13.48" y="347" font-size="16.5" font-weight="normal" fill="#262626" textLength="8.26" lengthAdjust="spacingAndGlyphs">5</text>
<text x="13.40" y="371" font-size="16.5" font-weight="normal" fill="#262626" textLength="8.26" lengthAdjust="spacingAndGlyphs">6</text>
<text x="13.48" y="395" font-size="16.5" font-weight="normal" fill="#262626" textLength="8.26" lengthAdjust="spacingAndGlyphs">7</text>
<text x="13.44" y="419" font-size="16.5" font-weight="normal" fill="#262626" textLength="8.26" lengthAdjust="spacingAndGlyphs">8</text>
<text x="13.48" y="443" font-size="16.5" font-weight="normal" fill="#262626" textLength="8.26" lengthAdjust="spacingAndGlyphs">9</text>
<text x="9.06" y="467" font-size="16.5" font-weight="normal" fill="#262626" textLength="16.52" lengthAdjust="spacingAndGlyphs">10</text>
<text x="9.69" y="491" font-size="16.5" font-weight="normal" fill="#262626" textLength="15.42" lengthAdjust="spacingAndGlyphs">11</text>
<text x="9.17" y="515" font-size="16.5" font-weight="normal" fill="#262626" textLength="16.52" lengthAdjust="spacingAndGlyphs">12</text>
<text x="9.10" y="539" font-size="16.5" font-weight="normal" fill="#262626" textLength="16.52" lengthAdjust="spacingAndGlyphs">13</text>
<text x="9.02" y="563" font-size="16.5" font-weight="normal" fill="#262626" textLength="16.52" lengthAdjust="spacingAndGlyphs">14</text>
<text x="9.10" y="587" font-size="16.5" font-weight="normal" fill="#262626" textLength="16.52" lengthAdjust="spacingAndGlyphs">15</text>
<text x="9.10" y="611" font-size="16.5" font-weight="normal" fill="#262626" textLength="16.52" lengthAdjust="spacingAndGlyphs">16</text>
<text x="9.17" y="635" font-size="16.5" font-weight="normal" fill="#262626" textLength="16.52" lengthAdjust="spacingAndGlyphs">17</text>
<text x="9.10" y="659" font-size="16.5" font-weight="normal" fill="#262626" textLength="16.52" lengthAdjust="spacingAndGlyphs">18</text>
<text x="9.14" y="683" font-size="16.5" font-weight="normal" fill="#262626" textLength="16.52" lengthAdjust="spacingAndGlyphs">19</text>
<text x="9.25" y="707" font-size="16.5" font-weight="normal" fill="#262626" textLength="16.52" lengthAdjust="spacingAndGlyphs">20</text>
<text x="9.32" y="731" font-size="16.5" font-weight="normal" fill="#262626" textLength="16.52" lengthAdjust="spacingAndGlyphs">21</text>
<path d="M14.5,229 L30,229 L30,213 Z" fill="#b4b4b4" stroke="none" stroke-width="1" />
<text x="36.86" y="251" font-size="15.2" font-weight="normal" fill="#000" textLength="30.89" lengthAdjust="spacingAndGlyphs">grey</text>
<text x="116.91" y="251" font-size="15.2" font-weight="normal" fill="#000" textLength="36.36" lengthAdjust="spacingAndGlyphs">5K5K</text>
<text x="196.33" y="251" font-size="15.2" font-weight="normal" fill="#000" textLength="17.91" lengthAdjust="spacingAndGlyphs">EL</text>
<text x="276.81" y="251" font-size="15.2" font-weight="normal" fill="#000" textLength="30.64" lengthAdjust="spacingAndGlyphs">8RD</text>
<text x="356.78" y="251" font-size="15.2" font-weight="normal" fill="#000" textLength="31.53" lengthAdjust="spacingAndGlyphs">U9B</text>
<text x="436.85" y="251" font-size="15.2" font-weight="normal" fill="#000" textLength="30.81" lengthAdjust="spacingAndGlyphs">3Q6</text>
<text x="517.21" y="251" font-size="15.2" font-weight="normal" fill="#000" textLength="24.00" lengthAdjust="spacingAndGlyphs">TJ4</text>
<text x="596.15" y="251" font-size="15.2" font-weight="normal" fill="#000" textLength="26.30" lengthAdjust="spacingAndGlyphs">DI6</text>
<text x="676.76" y="251" font-size="15.2" font-weight="normal" fill="#000" textLength="28.76" lengthAdjust="spacingAndGlyphs">CY0</text>
<text x="756.87" y="251" font-size="15.2" font-weight="normal" fill="#000" textLength="28.16" lengthAdjust="spacingAndGlyphs">0A2</text>
<text x="836.75" y="251" font-size="15.2" font-weight="normal" fill="#000" textLength="30.79" lengthAdjust="spacingAndGlyphs">G0C</text>
<text x="916.88" y="251" font-size="15.2" font-weight="normal" fill="#000" textLength="27.40" lengthAdjust="spacingAndGlyphs">0P0</text>
<text x="997.20" y="251" font-size="15.2" font-weight="normal" fill="#000" textLength="27.12" lengthAdjust="spacingAndGlyphs">4BF</text>
<text x="1077.19" y="251" font-size="15.2" font-weight="normal" fill="#000" textLength="28.91" lengthAdjust="spacingAndGlyphs">4UF</text>
<text x="1161.32" y="251" font-size="15.2" font-weight="normal" fill="#000" textLength="68.06" lengthAdjust="spacingAndGlyphs">1.00E+05</text>
<text x="1236.83" y="251" font-size="15.2" font-weight="normal" fill="#000" textLength="27.22" lengthAdjust="spacingAndGlyphs">8ZB</text>
<text x="1316.71" y="251" font-size="15.2" font-weight="normal" fill="#000" textLength="34.07" lengthAdjust="spacingAndGlyphs">2KW</text>
<text x="1396.94" y="251" font-size="15.2" font-weight="normal" fill="#000" textLength="24.71" lengthAdjust="spacingAndGlyphs">5SL</text>
<text x="1476.76" y="251" font-size="15.2" font-weight="normal" fill="#000" textLength="28.92" lengthAdjust="spacingAndGlyphs">6XD</text>
<text x="1556.88" y="251" font-size="15.2" font-weight="normal" fill="#000" textLength="31.83" lengthAdjust="spacingAndGlyphs">5RQ</text>
<text x="1636.78" y="251" font-size="15.2" font-weight="normal" fill="#000" textLength="25.59" lengthAdjust="spacingAndGlyphs">6FF</text>
<text x="1717.10" y="251" font-size="15.2" font-weight="normal" fill="#000" textLength="30.07" lengthAdjust="spacingAndGlyphs">A9G</text>
<text x="1796.78" y="251" font-size="15.2" font-weight="normal" fill="#000" textLength="26.57" lengthAdjust="spacingAndGlyphs">J1H</text>
<text x="1876.69" y="251" font-size="15.2" font-weight="normal" fill="#000" textLength="21.08" lengthAdjust="spacingAndGlyphs">NY</text>
<text x="36.92" y="275" font-size="15.2" font-weight="normal" fill="#000" textLength="31.33" lengthAdjust="spacingAndGlyphs">blue</text>
<text x="117.00" y="275" font-size="15.2" font-weight="normal" fill="#000" textLength="48.77" lengthAdjust="spacingAndGlyphs">5M5M</text>
<text x="196.33" y="275" font-size="15.2" font-weight="normal" fill="#000" textLength="17.91" lengthAdjust="spacingAndGlyphs">EL</text>
<text x="276.81" y="275" font-size="15.2" font-weight="normal" fill="#000" textLength="30.64" lengthAdjust="spacingAndGlyphs">8RD</text>
<text x="356.78" y="275" font-size="15.2" font-weight="normal" fill="#000" textLength="31.53" lengthAdjust="spacingAndGlyphs">U9B</text>
<text x="436.85" y="275" font-size="15.2" font-weight="normal" fill="#000" textLength="30.81" lengthAdjust="spacingAndGlyphs">3Q6</text>
<text x="517.21" y="275" font-size="15.2" font-weight="normal" fill="#000" textLength="24.00" lengthAdjust="spacingAndGlyphs">TJ4</text>
<text x="596.15" y="275" font-size="15.2" font-weight="normal" fill="#000" textLength="26.30" lengthAdjust="spacingAndGlyphs">DI6</text>
<text x="676.76" y="275" font-size="15.2" font-weight="normal" fill="#000" textLength="28.76" lengthAdjust="spacingAndGlyphs">CY0</text>
<text x="756.87" y="275" font-size="15.2" font-weight="normal" fill="#000" textLength="28.16" lengthAdjust="spacingAndGlyphs">0A2</text>
<text x="836.75" y="275" font-size="15.2" font-weight="normal" fill="#000" textLength="30.79" lengthAdjust="spacingAndGlyphs">G0C</text>
<text x="916.88" y="275" font-size="15.2" font-weight="normal" fill="#000" textLength="27.40" lengthAdjust="spacingAndGlyphs">0P0</text>
<text x="997.20" y="275" font-size="15.2" font-weight="normal" fill="#000" textLength="27.12" lengthAdjust="spacingAndGlyphs">4BF</text>
<text x="1077.19" y="275" font-size="15.2" font-weight="normal" fill="#000" textLength="28.91" lengthAdjust="spacingAndGlyphs">4UF</text>
<text x="1161.32" y="275" font-size="15.2" font-weight="normal" fill="#000" textLength="68.06" lengthAdjust="spacingAndGlyphs">1.00E+05</text>
<text x="1236.83" y="275" font-size="15.2" font-weight="normal" fill="#000" textLength="27.22" lengthAdjust="spacingAndGlyphs">8ZB</text>
<text x="1316.71" y="275" font-size="15.2" font-weight="normal" fill="#000" textLength="34.07" lengthAdjust="spacingAndGlyphs">2KW</text>
<text x="1396.94" y="275" font-size="15.2" font-weight="normal" fill="#000" textLength="24.71" lengthAdjust="spacingAndGlyphs">5SL</text>
<text x="1476.76" y="275" font-size="15.2" font-weight="normal" fill="#000" textLength="28.92" lengthAdjust="spacingAndGlyphs">6XD</text>
<text x="1556.88" y="275" font-size="15.2" font-weight="normal" fill="#000" textLength="31.83" lengthAdjust="spacingAndGlyphs">5RQ</text>
<text x="1636.78" y="275" font-size="15.2" font-weight="normal" fill="#000" textLength="25.59" lengthAdjust="spacingAndGlyphs">6FF</text>
<text x="1717.10" y="275" font-size="15.2" font-weight="normal" fill="#000" textLength="30.07" lengthAdjust="spacingAndGlyphs">A9G</text>
<text x="1796.78" y="275" font-size="15.2" font-weight="normal" fill="#000" textLength="26.57" lengthAdjust="spacingAndGlyphs">J1H</text>
<text x="1876.69" y="275" font-size="15.2" font-weight="normal" fill="#000" textLength="21.08" lengthAdjust="spacingAndGlyphs">NY</text>
<text x="36.68" y="299" font-size="15.2" font-weight="normal" fill="#000" textLength="24.84" lengthAdjust="spacingAndGlyphs">red</text>
<text x="116.74" y="299" font-size="15.2" font-weight="normal" fill="#000" textLength="40.42" lengthAdjust="spacingAndGlyphs">D8D8</text>
<text x="196.33" y="299" font-size="15.2" font-weight="normal" fill="#000" textLength="17.91" lengthAdjust="spacingAndGlyphs">EL</text>
<text x="276.81" y="299" font-size="15.2" font-weight="normal" fill="#000" textLength="30.64" lengthAdjust="spacingAndGlyphs">8RD</text>
<text x="356.78" y="299" font-size="15.2" font-weight="normal" fill="#000" textLength="31.53" lengthAdjust="spacingAndGlyphs">U9B</text>
<text x="436.85" y="299" font-size="15.2" font-weight="normal" fill="#000" textLength="30.81" lengthAdjust="spacingAndGlyphs">3Q6</text>
<text x="517.21" y="299" font-size="15.2" font-weight="normal" fill="#000" textLength="24.00" lengthAdjust="spacingAndGlyphs">TJ4</text>
<text x="596.15" y="299" font-size="15.2" font-weight="normal" fill="#000" textLength="26.30" lengthAdjust="spacingAndGlyphs">DI6</text>
<text x="676.76" y="299" font-size="15.2" font-weight="normal" fill="#000" textLength="28.76" lengthAdjust="spacingAndGlyphs">CY0</text>
<text x="756.87" y="299" font-size="15.2" font-weight="normal" fill="#000" textLength="28.16" lengthAdjust="spacingAndGlyphs">0A2</text>
<text x="836.75" y="299" font-size="15.2" font-weight="normal" fill="#000" textLength="30.79" lengthAdjust="spacingAndGlyphs">G0C</text>
<text x="916.88" y="299" font-size="15.2" font-weight="normal" fill="#000" textLength="27.40" lengthAdjust="spacingAndGlyphs">0P0</text>
<text x="997.20" y="299" font-size="15.2" font-weight="normal" fill="#000" textLength="27.12" lengthAdjust="spacingAndGlyphs">4BF</text>
<text x="1077.19" y="299" font-size="15.2" font-weight="normal" fill="#000" textLength="28.91" lengthAdjust="spacingAndGlyphs">4UF</text>
<text x="1161.32" y="299" font-size="15.2" font-weight="normal" fill="#000" textLength="68.06" lengthAdjust="spacingAndGlyphs">1.00E+05</text>
<text x="1236.83" y="299" font-size="15.2" font-weight="normal" fill="#000" textLength="27.22" lengthAdjust="spacingAndGlyphs">8ZB</text>
<text x="1316.71" y="299" font-size="15.2" font-weight="normal" fill="#000" textLength="34.07" lengthAdjust="spacingAndGlyphs">2KW</text>
<text x="1396.94" y="299" font-size="15.2" font-weight="normal" fill="#000" textLength="24.71" lengthAdjust="spacingAndGlyphs">5SL</text>
<text x="1476.76" y="299" font-size="15.2" font-weight="normal" fill="#000" textLength="28.92" lengthAdjust="spacingAndGlyphs">6XD</text>
<text x="1556.88" y="299" font-size="15.2" font-weight="normal" fill="#000" textLength="31.83" lengthAdjust="spacingAndGlyphs">5RQ</text>
<text x="1636.78" y="299" font-size="15.2" font-weight="normal" fill="#000" textLength="25.59" lengthAdjust="spacingAndGlyphs">6FF</text>
<text x="1717.10" y="299" font-size="15.2" font-weight="normal" fill="#000" textLength="30.07" lengthAdjust="spacingAndGlyphs">A9G</text>
<text x="1796.78" y="299" font-size="15.2" font-weight="normal" fill="#000" textLength="26.57" lengthAdjust="spacingAndGlyphs">J1H</text>
<text x="1876.69" y="299" font-size="15.2" font-weight="normal" fill="#000" textLength="21.08" lengthAdjust="spacingAndGlyphs">NY</text>
<text x="38.00" y="323" font-size="15.2" font-weight="normal" fill="#000" textLength="40.37" lengthAdjust="spacingAndGlyphs">white</text>
<text x="117.06" y="323" font-size="15.2" font-weight="normal" fill="#000" textLength="42.81" lengthAdjust="spacingAndGlyphs">0Q0Q</text>
<text x="196.33" y="323" font-size="15.2" font-weight="normal" fill="#000" textLength="17.91" lengthAdjust="spacingAndGlyphs">EL</text>
<text x="276.81" y="323" font-size="15.2" font-weight="normal" fill="#000" textLength="30.64" lengthAdjust="spacingAndGlyphs">8RD</text>
<text x="356.78" y="323" font-size="15.2" font-weight="normal" fill="#000" textLength="31.53" lengthAdjust="spacingAndGlyphs">U9B</text>
<text x="436.85" y="323" font-size="15.2" font-weight="normal" fill="#000" textLength="30.81" lengthAdjust="spacingAndGlyphs">3Q6</text>
<text x="517.21" y="323" font-size="15.2" font-weight="normal" fill="#000" textLength="24.00" lengthAdjust="spacingAndGlyphs">TJ4</text>
<text x="596.15" y="323" font-size="15.2" font-weight="normal" fill="#000" textLength="26.30" lengthAdjust="spacingAndGlyphs">DI6</text>
<text x="676.76" y="323" font-size="15.2" font-weight="normal" fill="#000" textLength="28.76" lengthAdjust="spacingAndGlyphs">CY0</text>
<text x="756.87" y="323" font-size="15.2" font-weight="normal" fill="#000" textLength="28.16" lengthAdjust="spacingAndGlyphs">0A2</text>
<text x="836.75" y="323" font-size="15.2" font-weight="normal" fill="#000" textLength="30.79" lengthAdjust="spacingAndGlyphs">G0C</text>
<text x="916.88" y="323" font-size="15.2" font-weight="normal" fill="#000" textLength="27.40" lengthAdjust="spacingAndGlyphs">0P0</text>
<text x="997.20" y="323" font-size="15.2" font-weight="normal" fill="#000" textLength="27.12" lengthAdjust="spacingAndGlyphs">4BF</text>
<text x="1077.19" y="323" font-size="15.2" font-weight="normal" fill="#000" textLength="28.91" lengthAdjust="spacingAndGlyphs">4UF</text>
<text x="1161.32" y="323" font-size="15.2" font-weight="normal" fill="#000" textLength="68.06" lengthAdjust="spacingAndGlyphs">1.00E+05</text>
<text x="1236.83" y="323" font-size="15.2" font-weight="normal" fill="#000" textLength="27.22" lengthAdjust="spacingAndGlyphs">8ZB</text>
<text x="1316.71" y="323" font-size="15.2" font-weight="normal" fill="#000" textLength="34.07" lengthAdjust="spacingAndGlyphs">2KW</text>
<text x="1396.94" y="323" font-size="15.2" font-weight="normal" fill="#000" textLength="24.71" lengthAdjust="spacingAndGlyphs">5SL</text>
<text x="1476.76" y="323" font-size="15.2" font-weight="normal" fill="#000" textLength="28.92" lengthAdjust="spacingAndGlyphs">6XD</text>
<text x="1556.88" y="323" font-size="15.2" font-weight="normal" fill="#000" textLength="31.83" lengthAdjust="spacingAndGlyphs">5RQ</text>
<text x="1636.78" y="323" font-size="15.2" font-weight="normal" fill="#000" textLength="25.59" lengthAdjust="spacingAndGlyphs">6FF</text>
<text x="1717.10" y="323" font-size="15.2" font-weight="normal" fill="#000" textLength="30.07" lengthAdjust="spacingAndGlyphs">A9G</text>
<text x="1796.78" y="323" font-size="15.2" font-weight="normal" fill="#000" textLength="26.57" lengthAdjust="spacingAndGlyphs">J1H</text>
<text x="1876.69" y="323" font-size="15.2" font-weight="normal" fill="#000" textLength="21.08" lengthAdjust="spacingAndGlyphs">NY</text>
<text x="36.94" y="347" font-size="15.2" font-weight="normal" fill="#000" textLength="38.05" lengthAdjust="spacingAndGlyphs">black</text>
<text x="117.00" y="347" font-size="15.2" font-weight="normal" fill="#000" textLength="37.61" lengthAdjust="spacingAndGlyphs">A1A1</text>
<text x="196.33" y="347" font-size="15.2" font-weight="normal" fill="#000" textLength="17.91" lengthAdjust="spacingAndGlyphs">EL</text>
<text x="276.81" y="347" font-size="15.2" font-weight="normal" fill="#000" textLength="30.64" lengthAdjust="spacingAndGlyphs">8RD</text>
<text x="356.78" y="347" font-size="15.2" font-weight="normal" fill="#000" textLength="31.53" lengthAdjust="spacingAndGlyphs">U9B</text>
<text x="436.85" y="347" font-size="15.2" font-weight="normal" fill="#000" textLength="30.81" lengthAdjust="spacingAndGlyphs">3Q6</text>
<text x="517.21" y="347" font-size="15.2" font-weight="normal" fill="#000" textLength="24.00" lengthAdjust="spacingAndGlyphs">TJ4</text>
<text x="596.15" y="347" font-size="15.2" font-weight="normal" fill="#000" textLength="26.30" lengthAdjust="spacingAndGlyphs">DI6</text>
<text x="676.76" y="347" font-size="15.2" font-weight="normal" fill="#000" textLength="28.76" lengthAdjust="spacingAndGlyphs">CY0</text>
<text x="756.87" y="347" font-size="15.2" font-weight="normal" fill="#000" textLength="28.16" lengthAdjust="spacingAndGlyphs">0A2</text>
<text x="836.75" y="347" font-size="15.2" font-weight="normal" fill="#000" textLength="30.79" lengthAdjust="spacingAndGlyphs">G0C</text>
<text x="916.88" y="347" font-size="15.2" font-weight="normal" fill="#000" textLength="27.40" lengthAdjust="spacingAndGlyphs">0P0</text>
<text x="997.20" y="347" font-size="15.2" font-weight="normal" fill="#000" textLength="27.12" lengthAdjust="spacingAndGlyphs">4BF</text>
<text x="1077.19" y="347" font-size="15.2" font-weight="normal" fill="#000" textLength="28.91" lengthAdjust="spacingAndGlyphs">4UF</text>
<text x="1161.32" y="347" font-size="15.2" font-weight="normal" fill="#000" textLength="68.06" lengthAdjust="spacingAndGlyphs">1.00E+05</text>
<text x="1236.83" y="347" font-size="15.2" font-weight="normal" fill="#000" textLength="27.22" lengthAdjust="spacingAndGlyphs">8ZB</text>
<text x="1316.71" y="347" font-size="15.2" font-weight="normal" fill="#000" textLength="34.07" lengthAdjust="spacingAndGlyphs">2KW</text>
<text x="1396.94" y="347" font-size="15.2" font-weight="normal" fill="#000" textLength="24.71" lengthAdjust="spacingAndGlyphs">5SL</text>
<text x="1476.76" y="347" font-size="15.2" font-weight="normal" fill="#000" textLength="28.92" lengthAdjust="spacingAndGlyphs">6XD</text>
<text x="1556.88" y="347" font-size="15.2" font-weight="normal" fill="#000" textLength="31.83" lengthAdjust="spacingAndGlyphs">5RQ</text>
<text x="1636.78" y="347" font-size="15.2" font-weight="normal" fill="#000" textLength="25.59" lengthAdjust="spacingAndGlyphs">6FF</text>
<text x="1717.10" y="347" font-size="15.2" font-weight="normal" fill="#000" textLength="30.07" lengthAdjust="spacingAndGlyphs">A9G</text>
<text x="1796.78" y="347" font-size="15.2" font-weight="normal" fill="#000" textLength="26.57" lengthAdjust="spacingAndGlyphs">J1H</text>
<text x="1876.69" y="347" font-size="15.2" font-weight="normal" fill="#000" textLength="21.08" lengthAdjust="spacingAndGlyphs">NY</text>
<rect x="1894" y="209" width="26" height="518" fill="#e6e6e6" />
<rect x="1894" y="232" width="1" height="495" fill="#9b9b9b" />
<rect x="1898.5" y="211.5" width="18" height="18" fill="#ffffff" stroke="#ababab" stroke-width="1" />
<path d="M1903,222 H1911 L1907,217.5 Z" fill="#777" stroke="none" stroke-width="1" />
<rect x="1898.5" y="230.5" width="18" height="520" fill="#ffffff" stroke="#ababab" stroke-width="1" />
<path d="M33,257 V232 H113.5 V253 M110,257 H33" fill="none" stroke="#1e7145" stroke-width="2" stroke-linecap="square"/>
<rect x="110.5" y="253.5" width="6" height="6" fill="#ffffff" />
<rect x="111" y="254" width="5" height="5" fill="#1e7145" />
</svg></body></html>
